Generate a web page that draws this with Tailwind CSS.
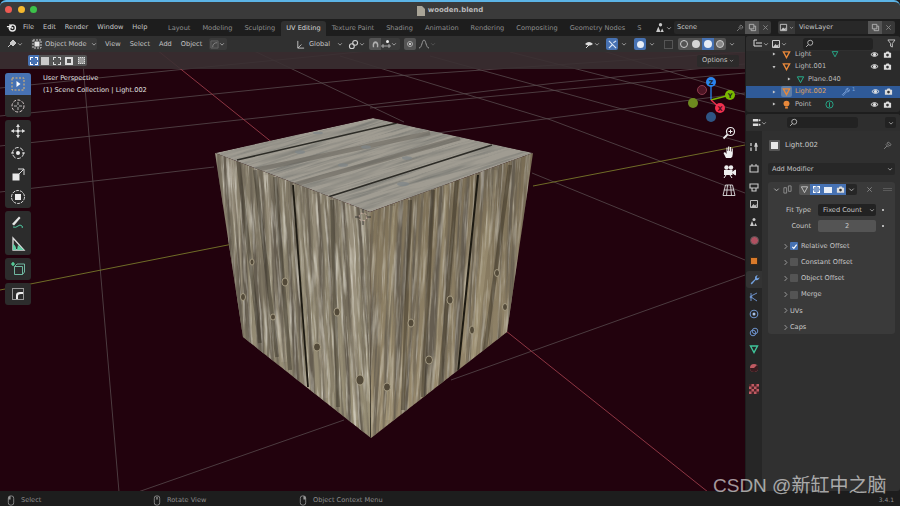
<!DOCTYPE html>
<html lang="en">
<head>
  <meta charset="UTF-8" />
  <title>wooden.blend</title>
  <script src="https://cdn.jsdelivr.net/npm/@tailwindcss/browser@4"></script>
</head>
<body class="w-[900px] h-[506px] overflow-hidden bg-[#1d1d1d] text-[#c4c4c4] text-[6.6px] leading-none font-['DejaVu_Sans',sans-serif]">

  <!-- shared glyphs -->
  <svg class="hidden">
    <symbol id="chev" viewBox="0 0 8 8"><path d="M1.5 3 4 5.5 6.5 3" fill="none" stroke="#bdbdbd" stroke-width="1"/></symbol>
    <symbol id="chevr" viewBox="0 0 8 8"><path d="M3 1.2 5.6 4 3 6.8" fill="none" stroke="#a8a8a8" stroke-width="1"/></symbol>
    <symbol id="tri" viewBox="0 0 8 8"><path d="M2.5 2 6 4 2.5 6Z" fill="#c8c8c8"/></symbol>
    <symbol id="eye" viewBox="0 0 10 10"><path d="M1 5Q5 .8 9 5 5 9.2 1 5Z" fill="none" stroke="#e6e6e6" stroke-width="1.1"/><circle cx="5" cy="5" r="1.7" fill="#e6e6e6"/></symbol>
    <symbol id="cam" viewBox="0 0 10 10"><path d="M1 3h2l1-1.3h2.4L7.400 3H9v5.500H1Z" fill="#dcdcdc"/><circle cx="5" cy="5.600" r="1.500" fill="#333"/></symbol>
    <symbol id="tri-obj" viewBox="0 0 10 10"><path d="M1.500 2h7L5 8.500Z" fill="none" stroke="#e8883a" stroke-width="1.500"/></symbol>
    <symbol id="mesh" viewBox="0 0 10 10"><path d="M1.500 2h7L5 8.500Z" fill="none" stroke="#27b08e" stroke-width="1.100"/></symbol>
    <symbol id="copy" viewBox="0 0 10 10"><path d="M1.500 1.500h5v5h-5ZM3.500 6.500v2h5v-5h-2" fill="none" stroke="#bdbdbd" stroke-width=".9"/></symbol>
    <symbol id="x" viewBox="0 0 8 8"><path d="M1.500 1.500l5 5M6.500 1.500l-5 5" stroke="#8a8a8a" stroke-width="1"/></symbol>
    <symbol id="mag" viewBox="0 0 10 10"><circle cx="5.800" cy="4.200" r="2.800" fill="none" stroke="#c8c8c8" stroke-width=".9"/><path d="M3.800 6.200 1.300 8.700" stroke="#c8c8c8" stroke-width="1"/></symbol>
    <symbol id="mouse" viewBox="0 0 8 12"><rect x="1" y="1" width="6" height="10" rx="2.500" fill="none" stroke="#9a9a9a" stroke-width=".9"/></symbol>
  </svg>

  <div class="flex flex-col w-full h-full">
    <!-- title bar -->
    <header class="relative h-[19px] flex items-center justify-center gap-[3px] bg-[#3a3a3a] border-t-2 border-[#5bb4e6] rounded-t-[6px]">
      <div class="absolute left-[5px] top-[3.500px] flex gap-[5.500px]">
        <span class="w-[7px] h-[7px] rounded-full bg-[#ee5a52]"></span>
        <span class="w-[7px] h-[7px] rounded-full bg-[#f5b82e]"></span>
        <span class="w-[7px] h-[7px] rounded-full bg-[#3cc24a]"></span>
      </div>
      <svg class="w-[8px] h-[10px]" viewBox="0 0 8 10"><path d="M0 0h5l3 3v7H0Z" fill="#a9a497"/></svg>
      <span class="text-[7px] font-bold text-[#b9b9b9]">wooden.blend</span>
    </header>

    <!-- top bar -->
    <nav class="h-[17px] flex items-center bg-[#1d1d1d] text-[#c8c8c8]">
      <svg class="ml-[6px] w-[11px] h-[11px]" viewBox="0 0 12 12"><circle cx="7" cy="6.500" r="3.300" fill="none" stroke="#e8e8e8" stroke-width="1.500"/><circle cx="7" cy="6.500" r="1.100" fill="#e8e8e8"/><path d="M1 5h5M3 7.500l3-2M3.500 3l3 1" stroke="#e8e8e8" stroke-width="1.200"/></svg>
      <div class="ml-[6px] flex gap-[9px] w-[129px] whitespace-nowrap">
        <span>File</span><span>Edit</span><span>Render</span><span>Window</span><span>Help</span>
      </div>
      <div class="ml-[10px] flex items-center h-full text-[#8f8f8f] w-[491px] overflow-hidden whitespace-nowrap">
        <span class="px-[6px] mt-[2px]">Layout</span>
        <span class="px-[6px] mt-[2px]">Modeling</span>
        <span class="px-[6px] mt-[2px]">Sculpting</span>
        <span class="h-[15px] mt-[2px] flex items-center px-[5px] rounded-t-[3px] bg-[#303030] text-[#d8d8d8]">UV Editing</span>
        <span class="px-[6px] mt-[2px]">Texture Paint</span>
        <span class="px-[6px] mt-[2px]">Shading</span>
        <span class="px-[6px] mt-[2px]">Animation</span>
        <span class="px-[6px] mt-[2px]">Rendering</span>
        <span class="px-[6px] mt-[2px]">Compositing</span>
        <span class="px-[6px] mt-[2px]">Geometry Nodes</span>
        <span class="px-[6px] mt-[2px]">S</span>
      </div>
      <svg class="ml-[2px] w-[11px] h-[11px]" viewBox="0 0 10 10"><path d="M1 9l2-5 2 5ZM5 9l1.500-3L8 9Z" fill="#c9c9c9"/><circle cx="5" cy="2.500" r="1.500" fill="#c9c9c9"/></svg>
      <svg class="w-[6px] h-[6px]"><use href="#chev"/></svg>
      <div class="ml-[2px] w-[60px] h-[13px] flex items-center pl-[3px] bg-[#282828] rounded-l-[2px]">Scene</div>
      <div class="w-[11px] h-[13px] bg-[#282828] flex items-center justify-center">
        <svg class="w-[8px] h-[8px]" viewBox="0 0 8 8"><path d="M1 7l2.500-2.500M2.500 3 5 5.500M3.500 2l2.500 2.500L7 3 5 1Z" stroke="#8a8a8a" fill="none" stroke-width=".8"/></svg>
      </div>
      <div class="w-[14px] h-[13px] bg-[#545454] flex items-center justify-center"><svg class="w-[9px] h-[9px]"><use href="#copy"/></svg></div>
      <div class="w-[12px] h-[13px] bg-[#383838] rounded-r-[2px] flex items-center justify-center"><svg class="w-[7px] h-[7px]"><use href="#x"/></svg></div>
      <div class="ml-[7px] w-[17px] h-[13px] bg-[#383838] rounded-l-[2px] flex items-center justify-center gap-[1px]">
        <svg class="w-[9px] h-[9px]" viewBox="0 0 10 10"><path d="M1.500 1.500h7v7h-7Z" fill="none" stroke="#c9c9c9"/><path d="M2 8l2.500-3L6 6.500 7.500 5v3Z" fill="#c9c9c9"/></svg>
        <svg class="w-[5px] h-[5px]"><use href="#chev"/></svg>
      </div>
      <div class="w-[73px] h-[13px] flex items-center pl-[4px] bg-[#282828]">ViewLayer</div>
      <div class="w-[14px] h-[13px] bg-[#545454] flex items-center justify-center"><svg class="w-[9px] h-[9px]"><use href="#copy"/></svg></div>
      <div class="w-[13px] h-[13px] bg-[#383838] rounded-r-[2px] flex items-center justify-center"><svg class="w-[7px] h-[7px]"><use href="#x"/></svg></div>
    </nav>

    <div class="flex flex-1 min-h-0">
      <!-- 3D viewport -->
      <main class="relative flex-1 bg-[#22020d] overflow-hidden">
        <svg class="absolute left-0 top-0 w-[745px] h-[455px]" viewBox="0 36 745 455">
          <defs>
            <filter id="grainDark" x="0" y="0" width="100%" height="100%">
              <feTurbulence type="fractalNoise" baseFrequency="0.2 0.005" numOctaves="5" seed="4"/>
              <feColorMatrix values="0 0 0 0 .13  0 0 0 0 .11  0 0 0 0 .08  3.600 0 0 0 -1.500"/>
            </filter>
            <filter id="grainLight" x="0" y="0" width="100%" height="100%">
              <feTurbulence type="fractalNoise" baseFrequency="0.45 0.02" numOctaves="4" seed="11"/>
              <feColorMatrix values="0 0 0 0 .86  0 0 0 0 .84  0 0 0 0 .76  0 3.200 0 0 -1.500"/>
            </filter>
            <filter id="grainTop" x="0" y="0" width="100%" height="100%">
              <feTurbulence type="fractalNoise" baseFrequency="0.015 0.4" numOctaves="4" seed="7"/>
              <feColorMatrix values="0 0 0 0 .2  0 0 0 0 .2  0 0 0 0 .18  2.400 0 0 0 -1"/>
            </filter>
            <clipPath id="faceL"><path d="M215 153 370 212 371 438 243 337Z"/></clipPath>
            <clipPath id="faceR"><path d="M533 153 370 212 371 438 507 332Z"/></clipPath>
            <clipPath id="faceT"><path d="M373 118 533 153 370 212 215 153Z"/></clipPath>
            <linearGradient id="woodL" x1="0" y1="0" x2="0" y2="1"><stop offset="0" stop-color="#7f7766"/><stop offset="1" stop-color="#9c9379"/></linearGradient>
            <linearGradient id="woodR" x1="0" y1="0" x2="0" y2="1"><stop offset="0" stop-color="#736750"/><stop offset="1" stop-color="#9d8f72"/></linearGradient>
          </defs>

          <!-- grid -->
          <g stroke="#574a4d" stroke-width=".8" fill="none">
            <path d="M0 88 176 70 480 40"/>
            <path d="M0 116 380 77 745 52"/>
            <path d="M0 146 266 117 556 83 745 64"/>
            <path d="M0 192 214 167M370 108 632 83 745 73"/>
            <path d="M437 133 745 93"/>
            <path d="M252 50 404 122"/>
            <path d="M340 56 551 120 745 193"/>
            <path d="M430 56 745 143"/>
            <path d="M510 52 745 112"/>
            <path d="M600 50 745 95"/>
            <path d="M532 173 745 260"/>
            <path d="M82 52 119 492"/>
            <path d="M138 492 344 420M451 380 745 275"/>
          </g>
          <path d="M0 290 253 240M533 186 745 145" stroke="#78782a" stroke-width=".9" fill="none"/>
          <path d="M157 50 375 225M432 272 708 492" stroke="#9a3c4a" stroke-width=".9" fill="none"/>

          <!-- left face -->
          <g clip-path="url(#faceL)">
            <rect x="210" y="115" width="170" height="330" fill="url(#woodL)"/>
            <g stroke="#b9b1a0" fill="none" stroke-width="6" opacity=".3">
              <path d="M228 156 250 340M266 175 284 362M315 194 325 398M352 206 356 420"/>
            </g>
            <rect x="190" y="100" width="200" height="360" filter="url(#grainDark)" transform="rotate(-3 290 280)"/>
            <rect x="190" y="100" width="200" height="360" filter="url(#grainLight)" opacity=".55" transform="rotate(-3 290 280)"/>
            <g stroke="#2e291e" fill="none" stroke-width="4" opacity=".42">
              <path d="M238 160 260 343M255 170 277 357M275 177 290 370M332 200 338 407"/>
            </g>
            <path d="M293 185 308 387" stroke="#1d1a12" stroke-width="1.800"/>
            <path d="M371 215 371 438" stroke="#17140e" stroke-width="1.600"/>
          </g>

          <!-- right face -->
          <g clip-path="url(#faceR)">
            <rect x="365" y="115" width="175" height="330" fill="url(#woodR)"/>
            <g stroke="#c0b295" fill="none" stroke-width="6" opacity=".28">
              <path d="M392 206 387 420M445 185 431 392M495 170 472 360"/>
            </g>
            <rect x="350" y="100" width="200" height="360" filter="url(#grainDark)" transform="rotate(3 450 280)"/>
            <rect x="350" y="100" width="200" height="360" filter="url(#grainLight)" opacity=".4" transform="rotate(3 450 280)"/>
            <g stroke="#2a2418" fill="none" stroke-width="4" opacity=".42">
              <path d="M410 200 403 410M433 190 423 397M457 180 440 387M510 165 485 350"/>
            </g>
            <path d="M478 175 458 373" stroke="#1d1a12" stroke-width="2"/>
          </g>

          <!-- top face -->
          <g clip-path="url(#faceT)">
            <path d="M373 118 533 153 370 212 215 153Z" fill="#a09c92"/>
            <rect x="205" y="110" width="340" height="110" filter="url(#grainTop)" transform="rotate(-17 373 165)"/>
            <g stroke="#625e55" stroke-width="4.500" opacity=".5" fill="none">
              <path d="M255 170 430 133M293 185 460 138"/>
            </g>
            <path d="M237 160 397 123M328 197 492 145" stroke="#2c2b26" stroke-width="1.500" fill="none"/>
            <g fill="#7f8689" opacity=".75">
              <ellipse cx="300" cy="152" rx="5" ry="1.800"/>
              <ellipse cx="366" cy="147" rx="5" ry="1.800"/>
              <ellipse cx="343" cy="165" rx="5" ry="1.800"/>
              <ellipse cx="407" cy="158" rx="5" ry="1.800"/>
              <ellipse cx="403" cy="184" rx="6" ry="2.200"/>
              <ellipse cx="318" cy="133" rx="5" ry="1.300"/>
            </g>
          </g>

          <!-- nail holes on the sides -->
          <g fill="#534a39" stroke="#b4aa90" stroke-width=".8">
            <ellipse cx="243" cy="297" rx="2.500" ry="3.500"/>
            <ellipse cx="252" cy="262" rx="2" ry="3"/>
            <ellipse cx="285" cy="282" rx="3" ry="4"/>
            <ellipse cx="273" cy="317" rx="2.500" ry="3"/>
            <ellipse cx="337" cy="312" rx="3" ry="4"/>
            <ellipse cx="317" cy="347" rx="3.500" ry="4"/>
            <ellipse cx="360" cy="380" rx="4" ry="5"/>
            <ellipse cx="387" cy="387" rx="3.500" ry="4"/>
            <ellipse cx="411" cy="323" rx="3" ry="4"/>
            <ellipse cx="429" cy="360" rx="3.500" ry="4"/>
            <ellipse cx="450" cy="300" rx="3" ry="4"/>
            <ellipse cx="472" cy="330" rx="2.500" ry="4"/>
            <ellipse cx="497" cy="273" rx="2.500" ry="3.500"/>
            <ellipse cx="505" cy="307" rx="2.500" ry="3.500"/>
          </g>

          <!-- 3d cursor -->
          <g fill="none" stroke-width=".9">
            <circle cx="363" cy="217" r="4" stroke="#d9b9b0" stroke-dasharray="2 2"/>
            <path d="M355 217h4M367 217h4M363 209v4M363 221v4" stroke="#302c2c"/>
          </g>

          <!-- nav gizmo -->
          <path d="M711 100V82" stroke="#2a85ee" stroke-width="1.300"/>
          <path d="M711 100 730 95" stroke="#7ab800" stroke-width="1.300"/>
          <path d="M711 100 720 108" stroke="#f0304f" stroke-width="1.300"/>
          <circle cx="702" cy="90" r="4.500" fill="#4d1524" stroke="#8b3a4b"/>
          <circle cx="693" cy="103" r="5" fill="#6d8a1f"/>
          <circle cx="711" cy="117" r="5" fill="#2f5583"/>
          <circle cx="711" cy="82" r="5" fill="#2a85ee"/>
          <circle cx="730" cy="95" r="5" fill="#7ab800"/>
          <circle cx="720" cy="108" r="5" fill="#f0304f"/>
          <g font-family="'DejaVu Sans',sans-serif" font-size="6.500" font-weight="700" fill="#1c1c1c" text-anchor="middle">
            <text x="711" y="84.500">Z</text><text x="730" y="97.500">Y</text><text x="720" y="110.500" fill="#4a0d18">X</text>
          </g>
        </svg>

        <!-- tool header -->
        <div class="relative h-[16px] flex items-center bg-[#303030] pl-[7px] whitespace-nowrap">
          <svg class="w-[10px] h-[10px]" viewBox="0 0 10 10"><path d="M1 8 4 5M6 1l3 3-3 3-3-3Z" fill="#c9c9c9" stroke="#c9c9c9"/></svg>
          <svg class="w-[6px] h-[6px]"><use href="#chev"/></svg>
          <div class="ml-[8px] w-[66px] h-[12px] bg-[#3a3a3a] rounded-[2px] flex items-center pl-[1px] gap-[3px]">
            <svg class="w-[10px] h-[10px]" viewBox="0 0 10 10"><path d="M1 1h8v8H1Z" fill="none" stroke="#ccc" stroke-dasharray="2 1"/><rect x="2.500" y="2.500" width="5" height="5" fill="#e4e4e4"/></svg>
            <span>Object Mode</span>
            <svg class="ml-auto w-[6px] h-[6px]"><use href="#chev"/></svg>
          </div>
          <div class="ml-[8px] flex gap-[9px] w-[99px]"><span>View</span><span>Select</span><span>Add</span><span>Object</span></div>
          <div class="ml-[5px] w-[18px] h-[12px] bg-[#3a3a3a] rounded-[2px] flex items-center pl-[1px]">
            <svg class="w-[9px] h-[9px]" viewBox="0 0 10 10"><path d="M1 1h8v8H1Z" fill="#444" stroke="#666"/><path d="M3 8Q3 3 8 3" stroke="#888" fill="none"/></svg>
            <svg class="w-[6px] h-[6px]"><use href="#chev"/></svg>
          </div>
          <!-- transform controls -->
          <div class="absolute left-[296px] top-[2px] flex items-center h-[12px]">
            <svg class="w-[9px] h-[9px]" viewBox="0 0 10 10"><path d="M2 1v8h7M2 9l4-4" stroke="#c9c9c9" fill="none"/></svg>
            <div class="ml-[4px] w-[36px] flex items-center justify-between pr-[2px]"><span>Global</span><svg class="w-[6px] h-[6px]"><use href="#chev"/></svg></div>
            <div class="ml-[3px] w-[18px] flex items-center">
              <svg class="w-[11px] h-[11px]" viewBox="0 0 10 10"><circle cx="3.500" cy="6.500" r="2.200" fill="none" stroke="#d0d0d0"/><circle cx="6.500" cy="3.500" r="2.200" fill="none" stroke="#d0d0d0"/></svg>
              <svg class="w-[6px] h-[6px]"><use href="#chev"/></svg>
            </div>
            <div class="ml-[3px] w-[12px] h-[12px] bg-[#545454] rounded-l-[2px] flex items-center justify-center">
              <svg class="w-[9px] h-[9px]" viewBox="0 0 10 10"><path d="M2 8Q1 2 5 1.500 9 2 8 8H6.500Q7 3.500 5 3.500 3 3.500 3.500 8Z" fill="#b0b0b0"/></svg>
            </div>
            <div class="w-[19px] h-[12px] flex items-center bg-[#3a3a3a] rounded-r-[2px]">
              <svg class="w-[10px] h-[10px]" viewBox="0 0 10 10"><circle cx="6.500" cy="2.500" r="1.500" fill="#eee"/><path d="M0 7h10M2 5v4M8 5v4" stroke="#c0c0c0" stroke-width=".8"/></svg>
              <svg class="w-[6px] h-[6px]"><use href="#chev"/></svg>
            </div>
            <div class="ml-[4px] w-[12px] h-[12px] bg-[#545454] rounded-[2px] flex items-center justify-center"><span class="w-[6px] h-[6px] rounded-full border border-[#aaa] flex items-center justify-center"><i class="w-[2px] h-[2px] rounded-full bg-[#eee]"></i></span></div>
            <svg class="ml-[2px] w-[12px] h-[10px]" viewBox="0 0 12 10"><path d="M1 9C4 9 4 1 6 1s2 8 5 8" stroke="#9a9a9a" fill="none"/></svg>
            <svg class="w-[6px] h-[6px] opacity-30"><use href="#chev"/></svg>
          </div>
          <!-- overlays and shading -->
          <div class="absolute left-[584px] top-[2px] flex items-center h-[12px]">
            <svg class="w-[10px] h-[10px]" viewBox="0 0 10 10"><path d="M1 5Q5 1 9 5 5 8 1 5Z" fill="#ddd"/><path d="M2 9l3-3" stroke="#ddd"/></svg>
            <svg class="w-[6px] h-[6px]"><use href="#chev"/></svg>
            <div class="ml-[6px] w-[12px] h-[12px] bg-[#4772b3] rounded-[2px] flex items-center justify-center">
              <svg class="w-[9px] h-[9px]" viewBox="0 0 10 10"><path d="M1 1l8 8M1 9l4-4M9 1 6 3" stroke="#dfe9f7" stroke-width="1.200" fill="none"/></svg>
            </div>
            <svg class="ml-[3px] w-[6px] h-[6px]"><use href="#chev"/></svg>
            <div class="ml-[7px] w-[12px] h-[12px] bg-[#4772b3] rounded-[2px] flex items-center justify-center"><span class="w-[7px] h-[7px] rounded-full bg-[#e8eef7]"></span></div>
            <svg class="ml-[3px] w-[6px] h-[6px]"><use href="#chev"/></svg>
            <div class="ml-[9px] w-[9px] h-[9px] border border-[#555]"></div>
            <div class="ml-[5px] h-[12px] flex items-center bg-[#545454] rounded-[2px]">
              <span class="w-[12px] flex justify-center"><i class="w-[8px] h-[8px] rounded-full border border-[#ccc]"></i></span>
              <span class="w-[12px] flex justify-center"><i class="w-[8px] h-[8px] rounded-full bg-[#d4d4d4]"></i></span>
              <span class="w-[12px] h-[12px] bg-[#4772b3] flex items-center justify-center"><i class="w-[8px] h-[8px] rounded-full bg-[#e6ecf5]"></i></span>
              <span class="w-[12px] flex justify-center"><i class="w-[8px] h-[8px] rounded-full bg-[#888] border border-[#ccc]"></i></span>
            </div>
            <svg class="ml-[3px] w-[6px] h-[6px]"><use href="#chev"/></svg>
          </div>
        </div>

        <!-- tool settings -->
        <div class="relative h-[17px] flex items-center justify-between bg-[#3a3032]/90 pl-[28px] pr-[6px]">
          <div class="flex h-[11px] rounded-[2px] overflow-hidden bg-[#545454]">
            <span class="w-[11px] bg-[#4772b3] flex items-center justify-center"><i class="w-[8px] h-[8px] border border-dashed border-white"></i></span>
            <span class="w-[12px] flex items-center justify-center"><i class="w-[8px] h-[8px] bg-[#c9c9c9]"></i></span>
            <span class="w-[12px] flex items-center justify-center"><i class="w-[8px] h-[8px] border border-dashed border-[#ddd]"></i></span>
            <span class="w-[12px] flex items-center justify-center"><i class="w-[8px] h-[8px] border-2 border-[#ddd]"></i></span>
            <span class="w-[12px] flex items-center justify-center"><i class="w-[7px] h-[7px] border border-dotted border-[#ddd] bg-[#999]"></i></span>
          </div>
          <div class="w-[42px] h-[12px] bg-[#2c2a2a] rounded-[2px] flex items-center pl-[5px] gap-[2px]">
            <span>Options</span><svg class="w-[5px] h-[5px]"><use href="#chev"/></svg>
          </div>
        </div>

        <!-- viewport text -->
        <div class="absolute left-[43px] top-[39px] flex flex-col gap-[5.500px] text-[#e0e0e0] whitespace-nowrap">
          <span>User Perspective</span>
          <span>(1) Scene Collection | Light.002</span>
        </div>

        <!-- toolbar -->
        <div class="absolute left-[5px] top-[37px] w-[26px] flex flex-col gap-[3px]">
          <div class="rounded-[3px] overflow-hidden bg-[#2c2c2c]">
            <div class="h-[22px] bg-[#4772b3] flex items-center justify-center">
              <svg class="w-[16px] h-[16px]" viewBox="0 0 16 16"><rect x="2" y="2" width="12" height="12" fill="none" stroke="#e3b871" stroke-dasharray="2 1.500"/><path d="M6.500 5v6l4-3Z" fill="#fff"/></svg>
            </div>
            <div class="h-[22px] flex items-center justify-center">
              <svg class="w-[16px] h-[16px]" viewBox="0 0 16 16"><circle cx="8" cy="8" r="6" fill="none" stroke="#dcd0d0" stroke-dasharray="3 1.500"/><path d="M8 4v3M8 9v3M4 8h3M9 8h3" stroke="#d8d8d8" stroke-width=".8"/></svg>
            </div>
          </div>
          <div class="rounded-[3px] overflow-hidden bg-[#2c2c2c] flex flex-col">
            <div class="h-[22px] flex items-center justify-center">
              <svg class="w-[16px] h-[16px]" viewBox="0 0 16 16"><path d="M8 1.500v13M1.500 8h13" stroke="#ddd"/><path d="M8 1 6 4h4ZM8 15l-2-3h4ZM1 8l3-2v4ZM15 8l-3-2v4Z" fill="#ddd"/><circle cx="8" cy="8" r="1.500" fill="#eee"/></svg>
            </div>
            <div class="h-[22px] flex items-center justify-center">
              <svg class="w-[16px] h-[16px]" viewBox="0 0 16 16"><circle cx="8" cy="8" r="5.500" fill="none" stroke="#ddd" stroke-dasharray="4 1.500"/><circle cx="8" cy="8" r="2" fill="#eee"/><path d="M1 8h3M12 8h3" stroke="#ddd"/></svg>
            </div>
            <div class="h-[22px] flex items-center justify-center">
              <svg class="w-[16px] h-[16px]" viewBox="0 0 16 16"><rect x="2.500" y="6.500" width="7" height="7" fill="#e8e8e8"/><path d="M8 2h6v6M14 2 9 7" stroke="#ddd" fill="none"/></svg>
            </div>
            <div class="h-[22px] flex items-center justify-center">
              <svg class="w-[16px] h-[16px]" viewBox="0 0 16 16"><circle cx="8" cy="8" r="6.500" fill="none" stroke="#ddd" stroke-dasharray="3 1"/><rect x="5" y="5" width="6" height="6" fill="#eee"/></svg>
            </div>
          </div>
          <div class="rounded-[3px] overflow-hidden bg-[#2c2c2c] flex flex-col">
            <div class="h-[22px] flex items-center justify-center">
              <svg class="w-[16px] h-[16px]" viewBox="0 0 16 16"><path d="M2 10 9 2.500l1.500 1.500L4 11.500Z" fill="#e6e6e6"/><path d="M3 13q3 1 5-1t4 0q1 1 0 2" fill="none" stroke="#4fc6a0"/></svg>
            </div>
            <div class="h-[22px] flex items-center justify-center">
              <svg class="w-[16px] h-[16px]" viewBox="0 0 16 16"><path d="M3 2v12h11Z" fill="none" stroke="#ddd" stroke-width="1.300"/><path d="M6 14a6 6 0 0 0-3-6v6ZM7 14l7 0-6-5Z" fill="#63cfa6"/></svg>
            </div>
          </div>
          <div class="h-[22px] rounded-[3px] bg-[#2c2c2c] flex items-center justify-center">
            <svg class="w-[16px] h-[16px]" viewBox="0 0 16 16"><path d="M4.500 5.500h8v8h-8ZM4.500 5.500l2.500-2.500h7.500v8l-2 2.500" fill="none" stroke="#6fb8a0"/><path d="M3 1v4M1 3h4" stroke="#5ff0b0" stroke-width="1.200"/></svg>
          </div>
          <div class="h-[22px] rounded-[3px] bg-[#2c2c2c] flex items-center justify-center">
            <svg class="w-[16px] h-[16px]" viewBox="0 0 16 16"><rect x="2.500" y="2.500" width="11" height="11" fill="none" stroke="#999"/><path d="M6 13V9q0-3 4-3h3v2h-2q-3 0-3 2v3Z" fill="#eee"/></svg>
          </div>
        </div>

        <!-- view buttons -->
        <div class="absolute left-[722px] top-[90px] flex flex-col gap-[5px]">
          <svg class="w-[14px] h-[14px]" viewBox="0 0 14 14"><circle cx="8.500" cy="5.500" r="4" fill="none" stroke="#eee" stroke-width="1.200"/><path d="M5.500 8.500 1.500 12.500" stroke="#eee" stroke-width="1.800"/><path d="M8.500 3.500v4M6.500 5.500h4" stroke="#eee"/></svg>
          <svg class="w-[14px] h-[14px]" viewBox="0 0 14 14"><path d="M4 13 1.500 8 3 7l1.500 2V2.500h1V6h.6V1.500h1.200V6h.6V2h1.200v4.500h.6V3.500h1.100V9q0 3-2 4Z" fill="#f0f0f0"/></svg>
          <svg class="w-[14px] h-[14px]" viewBox="0 0 14 14"><circle cx="4.500" cy="3.500" r="2.200" fill="#eee"/><circle cx="9" cy="3.500" r="2.200" fill="#eee"/><rect x="2" y="6" width="8.500" height="5" fill="#eee"/><path d="M10.500 8l3-2v5l-3-2ZM4 11l-2 3M8 11l2 3" fill="#eee" stroke="#eee"/></svg>
          <svg class="w-[14px] h-[14px]" viewBox="0 0 14 14"><path d="M3.500 2h7L13 12.500H1ZM1.800 7h10.400M5.500 2 4.500 12.500M8.500 2l1 10.500" fill="none" stroke="#ddd" stroke-width=".9"/></svg>
        </div>
      </main>

      <!-- right column -->
      <aside class="w-[155px] flex flex-col gap-[2px] bg-[#1d1d1d] pl-[1px] whitespace-nowrap">
        <!-- outliner -->
        <section class="h-[76px] bg-[#2b2b2b] rounded-[3px] overflow-hidden flex flex-col">
          <div class="h-[15px] shrink-0 flex items-center bg-[#303030] pl-[7px] pr-[4px]">
            <div class="w-[16px] flex items-center">
              <svg class="w-[10px] h-[10px]" viewBox="0 0 10 10"><path d="M1 1h3M3 4h6M3 7h6M1 1v6h2" stroke="#ddd" fill="none"/></svg>
              <svg class="w-[6px] h-[6px]"><use href="#chev"/></svg>
            </div>
            <div class="ml-[2px] w-[16px] flex items-center">
              <svg class="w-[10px] h-[10px]" viewBox="0 0 10 10"><path d="M1.500 1.500h7v7h-7Z" fill="none" stroke="#c9c9c9"/><path d="M2 8l2.500-3L6 6.500 7.500 5v3Z" fill="#c9c9c9"/></svg>
              <svg class="w-[6px] h-[6px]"><use href="#chev"/></svg>
            </div>
            <div class="ml-[16px] w-[71px] h-[12px] rounded-[3px] bg-[#222] flex items-center pl-[2px]"><svg class="w-[9px] h-[9px]"><use href="#mag"/></svg></div>
            <svg class="ml-[14px] w-[9px] h-[9px]" viewBox="0 0 10 10"><path d="M1 1h8L6 5v4L4 8V5Z" fill="none" stroke="#ccc"/></svg>
          </div>
          <ul class="flex-1 text-[#bcbcbc] -mt-[3px]">
            <li class="h-[12.500px] flex items-center pl-[27px]">
              <svg class="w-[6px] h-[6px] -ml-[2px]"><use href="#tri"/></svg><svg class="ml-[5px] w-[9px] h-[9px]"><use href="#tri-obj"/></svg>
              <span class="ml-[4px] w-[36px]">Light</span><svg class="w-[8px] h-[8px]"><use href="#mesh"/></svg>
              <svg class="ml-[31px] w-[9px] h-[9px]"><use href="#eye"/></svg><svg class="ml-[4px] w-[9px] h-[9px]"><use href="#cam"/></svg>
            </li>
            <li class="h-[12.500px] flex items-center pl-[25px]">
              <svg class="w-[6px] h-[6px] rotate-90"><use href="#tri"/></svg><svg class="ml-[5px] w-[9px] h-[9px]"><use href="#tri-obj"/></svg>
              <span class="ml-[4px] w-[75px]">Light.001</span>
              <svg class="w-[9px] h-[9px]"><use href="#eye"/></svg><svg class="ml-[4px] w-[9px] h-[9px]"><use href="#cam"/></svg>
            </li>
            <li class="h-[12.500px] flex items-center pl-[40px]">
              <svg class="w-[6px] h-[6px]"><use href="#tri"/></svg><svg class="ml-[4px] w-[9px] h-[9px]"><use href="#mesh"/></svg>
              <span class="ml-[3px]">Plane.040</span>
            </li>
            <li class="h-[12.500px] flex items-center pl-[25px] bg-[#2f5a98]">
              <svg class="w-[6px] h-[6px]"><use href="#tri"/></svg><span class="ml-[4px] w-[11px] h-[11px] rounded-[2px] bg-[#5f7ea6] flex items-center justify-center"><svg class="w-[9px] h-[9px]"><use href="#tri-obj"/></svg></span>
              <span class="ml-[3px] w-[46px] text-[#e0a35a]">Light.002</span>
              <svg class="w-[9px] h-[9px]" viewBox="0 0 10 10"><path d="M1.500 8.500 5.500 4.500Q5 1.500 8 1.200L6.800 3 8 4l1.500-1Q9.300 6 6 5.500L2.500 9.500Z" fill="none" stroke="#7fa6dc" stroke-width=".9"/></svg>
              <span class="ml-[2px] w-[19px] text-[#7fa6dc] -mt-[4px] text-[5px]">1</span>
              <svg class="w-[9px] h-[9px]"><use href="#eye"/></svg><svg class="ml-[4px] w-[9px] h-[9px]"><use href="#cam"/></svg>
            </li>
            <li class="h-[12.500px] flex items-center pl-[25px]">
              <svg class="w-[6px] h-[6px]"><use href="#tri"/></svg>
              <svg class="ml-[5px] w-[9px] h-[9px]" viewBox="0 0 10 10"><circle cx="5" cy="4" r="3.300" fill="#e8883a"/><rect x="3.500" y="7.500" width="3" height="2" fill="#e8883a"/></svg>
              <span class="ml-[4px] w-[30px]">Point</span>
              <svg class="w-[9px] h-[9px]" viewBox="0 0 10 10"><circle cx="5" cy="5" r="4" fill="none" stroke="#27b08e"/><path d="M5 2.500V8" stroke="#27b08e"/></svg>
              <svg class="ml-[36px] w-[9px] h-[9px]"><use href="#eye"/></svg><svg class="ml-[4px] w-[9px] h-[9px]"><use href="#cam"/></svg>
            </li>
          </ul>
        </section>

        <!-- properties -->
        <section class="flex-1 rounded-[3px] overflow-hidden bg-[#303030] flex flex-col">
          <div class="h-[17px] shrink-0 flex items-center pl-[6px] pr-[4px] bg-[#2e2e2e]">
            <svg class="w-[9px] h-[9px]" viewBox="0 0 10 10"><path d="M1 1h6v3H1ZM1 6h6v3H1Z" fill="#ddd"/><circle cx="8.500" cy="2.500" r="1" fill="#ddd"/><circle cx="8.500" cy="7.500" r="1" fill="#ddd"/></svg>
            <svg class="w-[6px] h-[6px]"><use href="#chev"/></svg>
            <div class="ml-[20px] w-[71px] h-[11px] rounded-[3px] bg-[#222] flex items-center pl-[2px]"><svg class="w-[9px] h-[9px]"><use href="#mag"/></svg></div>
            <div class="ml-auto w-[11px] h-[11px] rounded-[2px] bg-[#222] flex items-center justify-center"><svg class="w-[6px] h-[6px]"><use href="#chev"/></svg></div>
          </div>
          <div class="flex flex-1 min-h-0">
            <!-- tabs -->
            <div class="w-[16px] shrink-0 bg-[#262626] flex flex-col items-center pt-[5px]">
              <span class="h-[22px] flex items-center"><svg class="w-[10px] h-[10px]" viewBox="0 0 10 10"><path d="M2 1v3M2 5.500V9M7 1l-1 3h2L7 1M7 4v5" stroke="#ccc" stroke-width="1.300" fill="none"/></svg></span>
              <span class="h-[20px] flex items-center"><svg class="w-[10px] h-[10px]" viewBox="0 0 10 10"><path d="M1 3h8v6H1Z" fill="none" stroke="#ccc" stroke-width="1.100"/><path d="M3 1v2M7 1v2" stroke="#ccc"/></svg></span>
              <span class="h-[17.500px] flex items-center"><svg class="w-[10px] h-[10px]" viewBox="0 0 10 10"><path d="M1 2h8v4H1ZM3 6v3h4V6" fill="none" stroke="#ccc" stroke-width="1.100"/></svg></span>
              <span class="h-[17.500px] flex items-center"><svg class="w-[10px] h-[10px]" viewBox="0 0 10 10"><path d="M1.500 1.500h7v7h-7Z" fill="none" stroke="#bbb"/><path d="M2 8l2.500-3L6 6.500 7.500 5v3Z" fill="#bbb"/></svg></span>
              <span class="h-[17.500px] flex items-center"><svg class="w-[10px] h-[10px]" viewBox="0 0 10 10"><path d="M1 9l2-5 2 5ZM5 9l1.500-3L8 9Z" fill="#c9c9c9"/><circle cx="5" cy="2.500" r="1.500" fill="#c9c9c9"/></svg></span>
              <span class="h-[20px] flex items-center"><span class="w-[9px] h-[9px] rounded-full bg-[#b05060] border border-[#555]"></span></span>
              <span class="h-[20px] flex items-center"><svg class="w-[10px] h-[10px]" viewBox="0 0 10 10"><rect x="1.500" y="1.500" width="7" height="7" fill="#d97a2a" stroke="#3a2a1a"/></svg></span>
              <span class="h-[17.500px] w-full bg-[#333] rounded-l-[3px] flex items-center justify-center"><svg class="w-[11px] h-[11px]" viewBox="0 0 10 10"><path d="M1.500 8.500 5.500 4.500Q5 1.500 8 1.200L6.800 3 8 4l1.500-1Q9.300 6 6 5.500L2.500 9.500Z" fill="#74a2e0"/></svg></span>
              <span class="h-[17.500px] flex items-center"><svg class="w-[10px] h-[10px]" viewBox="0 0 10 10"><path d="M2 1v8M2 4l6-3M2 5l6 4" stroke="#6c90c8" fill="none"/><circle cx="2" cy="5" r="1.300" fill="#6c90c8"/></svg></span>
              <span class="h-[17.500px] flex items-center"><svg class="w-[10px] h-[10px]" viewBox="0 0 10 10"><circle cx="5" cy="5" r="3.800" fill="none" stroke="#6c90c8" stroke-width="1.100"/><circle cx="5" cy="5" r="1.500" fill="#a9c3ea"/></svg></span>
              <span class="h-[17.500px] flex items-center"><svg class="w-[10px] h-[10px]" viewBox="0 0 10 10"><circle cx="4" cy="6" r="2.800" fill="none" stroke="#6c90c8"/><circle cx="6" cy="4" r="2.800" fill="none" stroke="#6c90c8"/></svg></span>
              <span class="h-[17.500px] flex items-center"><svg class="w-[10px] h-[10px]" viewBox="0 0 10 10"><path d="M1.500 2h7L5 8.500Z" fill="none" stroke="#3fc59a" stroke-width="1.400"/></svg></span>
              <span class="h-[20px] flex items-center"><svg class="w-[10px] h-[10px]" viewBox="0 0 10 10"><circle cx="5" cy="5" r="4" fill="#c05a62"/><path d="M1 5h4l3-3a4 4 0 0 1-3 7 4 4 0 0 1-4-4Z" fill="#3a1c20"/></svg></span>
              <span class="h-[22px] flex items-center"><svg class="w-[10px] h-[10px]" viewBox="0 0 10 10"><rect width="10" height="10" fill="#c05a62"/><path d="M0 0h2.500v2.500H0ZM5 0h2.500v2.500H5ZM2.500 2.500H5V5H2.500ZM7.500 2.500H10V5H7.500ZM0 5h2.500v2.500H0ZM5 5h2.500v2.500H5ZM2.500 7.500H5V10H2.500ZM7.500 7.500H10V10H7.500Z" fill="#4a2428"/></svg></span>
            </div>
            <!-- modifier tab -->
            <div class="flex-1 pl-[6px] pr-[5px] pt-[5px] text-[#c8c8c8]">
              <div class="h-[18px] flex items-center pl-[1px]">
                <span class="w-[11px] h-[11px] rounded-[1px] bg-[#e6e6e6] border-2 border-[#555] mr-[5px]"></span>
                <span class="text-[7px]">Light.002</span>
                <svg class="ml-auto mr-[3px] w-[9px] h-[9px]" viewBox="0 0 8 8"><path d="M1 7l2.500-2.500M2.500 3 5 5.500M3.500 2l2.500 2.500L7 3 5 1Z" stroke="#8a8a8a" fill="none" stroke-width=".8"/></svg>
              </div>
              <div class="mt-[9px] h-[12px] rounded-[2px] bg-[#272727] flex items-center justify-between pl-[4px] pr-[2px]">
                <span>Add Modifier</span><svg class="w-[6px] h-[6px]"><use href="#chev"/></svg>
              </div>
              <div class="mt-[7px] h-[152px] rounded-[3px] bg-[#3a3a3a]">
                <div class="h-[15px] flex items-center pl-[5px]">
                  <svg class="w-[7px] h-[7px]"><use href="#chev"/></svg>
                  <svg class="ml-[3px] w-[9px] h-[9px]" viewBox="0 0 10 10"><path d="M1 3h3v6H1ZM6 1h3v6H6Z" fill="none" stroke="#999" stroke-width=".9"/></svg>
                  <div class="ml-[7px] flex h-[11px] rounded-[2px] overflow-hidden">
                    <span class="w-[11px] bg-[#545454] flex items-center justify-center"><svg class="w-[9px] h-[9px]" viewBox="0 0 10 10"><path d="M1.500 2h7L5 8.500Z" fill="none" stroke="#ccc"/></svg></span>
                    <span class="w-[12px] bg-[#4772b3] flex items-center justify-center"><i class="w-[7px] h-[7px] border border-dashed border-white bg-white/30"></i></span>
                    <span class="w-[12px] bg-[#4772b3] flex items-center justify-center"><i class="w-[8px] h-[6px] bg-[#e8eef7]"></i></span>
                    <span class="w-[12px] bg-[#4772b3] flex items-center justify-center"><svg class="w-[9px] h-[9px]"><use href="#cam"/></svg></span>
                    <span class="w-[11px] bg-[#262626] flex items-center justify-center"><svg class="w-[7px] h-[7px]"><use href="#chev"/></svg></span>
                  </div>
                  <svg class="ml-[9px] w-[7px] h-[7px]"><use href="#x"/></svg>
                  <span class="ml-[10px] w-[9px] h-[3px] border-y border-[#5a5a5a]"></span>
                </div>
                <div class="mt-[7px] h-[12px] flex items-center">
                  <span class="w-[43px] text-right">Fit Type</span>
                  <div class="ml-[7px] w-[58px] h-[12px] rounded-[2px] bg-[#222] flex items-center justify-between pl-[5px] pr-[1px]"><span>Fixed Count</span><svg class="w-[6px] h-[6px]"><use href="#chev"/></svg></div>
                  <span class="ml-[6px] w-[2px] h-[2px] rounded-full bg-[#ddd]"></span>
                </div>
                <div class="mt-[4px] h-[12px] flex items-center">
                  <span class="w-[43px] text-right">Count</span>
                  <div class="ml-[7px] w-[58px] h-[12px] rounded-[2px] bg-[#545454] flex items-center justify-center"><span>2</span></div>
                  <span class="ml-[6px] w-[2px] h-[2px] rounded-full bg-[#ddd]"></span>
                </div>
                <ul class="mt-[6px] flex flex-col">
                  <li class="h-[16.200px] flex items-center pl-[14px]"><svg class="w-[7px] h-[7px]"><use href="#chevr"/></svg><span class="ml-[1px] w-[8px] h-[8px] rounded-[1px] bg-[#4772b3] flex items-center justify-center"><svg class="w-[7px] h-[7px]" viewBox="0 0 8 8"><path d="M1.500 4.500 3.200 6.200 6.500 1.800" fill="none" stroke="#fff" stroke-width="1.300"/></svg></span><span class="ml-[3px]">Relative Offset</span></li>
                  <li class="h-[16.200px] flex items-center pl-[14px]"><svg class="w-[7px] h-[7px]"><use href="#chevr"/></svg><span class="ml-[1px] w-[8px] h-[8px] rounded-[1px] bg-[#545454]"></span><span class="ml-[3px]">Constant Offset</span></li>
                  <li class="h-[16.200px] flex items-center pl-[14px]"><svg class="w-[7px] h-[7px]"><use href="#chevr"/></svg><span class="ml-[1px] w-[8px] h-[8px] rounded-[1px] bg-[#545454]"></span><span class="ml-[3px]">Object Offset</span></li>
                  <li class="h-[16.200px] flex items-center pl-[14px]"><svg class="w-[7px] h-[7px]"><use href="#chevr"/></svg><span class="ml-[1px] w-[8px] h-[8px] rounded-[1px] bg-[#545454]"></span><span class="ml-[3px]">Merge</span></li>
                  <li class="h-[16.200px] flex items-center pl-[14px]"><svg class="w-[7px] h-[7px]"><use href="#chevr"/></svg><span class="ml-[1px]">UVs</span></li>
                  <li class="h-[16.200px] flex items-center pl-[14px]"><svg class="w-[7px] h-[7px]"><use href="#chevr"/></svg><span class="ml-[1px]">Caps</span></li>
                </ul>
              </div>
            </div>
          </div>
        </section>
      </aside>
    </div>

    <!-- status bar -->
    <footer class="relative h-[15px] flex items-center bg-[#1d1d1d] text-[#8e8e8e] pl-[7px] pt-[3px]">
      <svg class="w-[8px] h-[11px]" viewBox="0 0 8 12"><use href="#mouse"/><path d="M1 5V3.500A2.500 2.500 0 0 1 3.500 1V5Z" fill="#9a9a9a"/></svg><span class="ml-[6px] w-[132px]">Select</span>
      <svg class="w-[8px] h-[11px]" viewBox="0 0 8 12"><use href="#mouse"/><rect x="3.300" y="2" width="1.400" height="3" fill="#9a9a9a"/></svg><span class="ml-[6px] w-[132px]">Rotate View</span>
      <svg class="w-[8px] h-[11px]" viewBox="0 0 8 12"><use href="#mouse"/><path d="M7 5V3.500A2.500 2.500 0 0 0 4.500 1V5Z" fill="#9a9a9a"/></svg><span class="ml-[6px]">Object Context Menu</span>
      <span class="absolute right-[6px] top-[6px] text-[6px] text-[#8e8e8e]">3.4.1</span>
    </footer>
  </div>

  <!-- watermark -->
  <span class="absolute left-[713px] top-[475px] text-[19px] leading-[21px] text-white/60 whitespace-nowrap font-['Liberation_Sans','Noto_Sans_CJK_SC',sans-serif]">CSDN @新缸中之脑</span>
</body>
</html>
